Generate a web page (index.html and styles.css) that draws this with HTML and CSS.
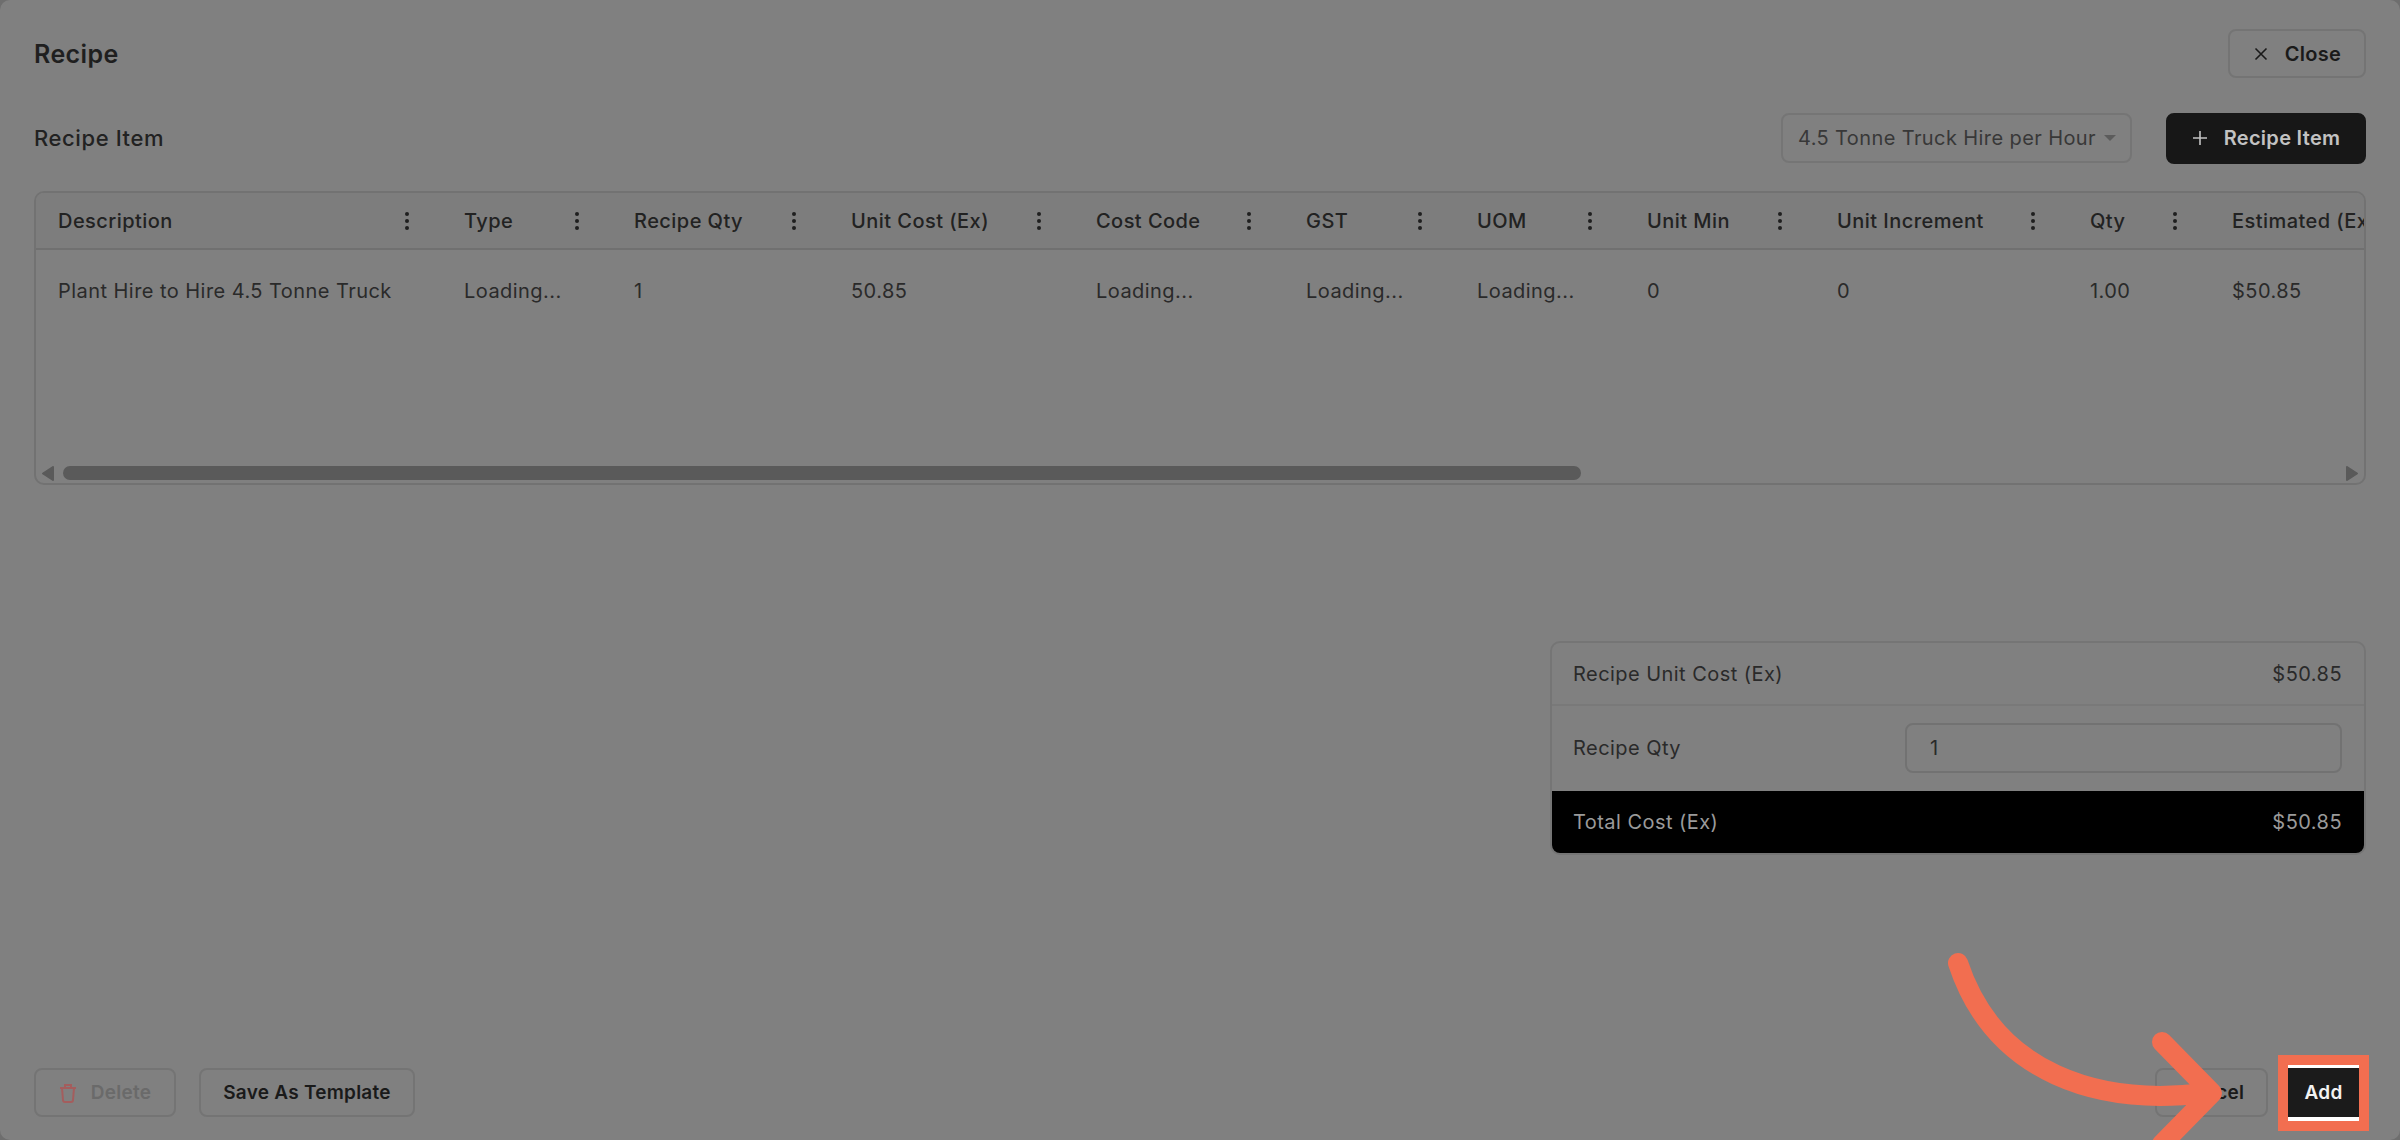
FILE: index.html
```html
<!DOCTYPE html>
<html lang="en">
<head>
<meta charset="utf-8">
<title>Recipe</title>
<link rel="stylesheet" href="styles.css">
</head>
<body>
<main class="modal">
  <header class="top">
    <h1 class="title">Recipe</h1>
    <button class="btn btn-close"><svg class="ic" viewBox="0 0 16 16"><path d="M2.5 2.5l11 11M13.5 2.5l-11 11"/></svg>Close</button>
  </header>
  <section class="bar">
    <h2 class="subtitle">Recipe Item</h2>
    <div class="select">4.5 Tonne Truck Hire per Hour<span class="caret"></span></div>
    <button class="btn btn-dark"><svg class="ic" viewBox="0 0 16 16"><path d="M8 1v14M1 8h14"/></svg>Recipe Item</button>
  </section>
  <section class="table">
    <div class="grid head">
      <div class="cell">Description<i class="kebab"></i></div>
      <div class="cell">Type<i class="kebab"></i></div>
      <div class="cell">Recipe Qty<i class="kebab"></i></div>
      <div class="cell">Unit Cost (Ex)<i class="kebab"></i></div>
      <div class="cell">Cost Code<i class="kebab"></i></div>
      <div class="cell">GST<i class="kebab"></i></div>
      <div class="cell">UOM<i class="kebab"></i></div>
      <div class="cell">Unit Min<i class="kebab"></i></div>
      <div class="cell">Unit Increment<i class="kebab"></i></div>
      <div class="cell">Qty<i class="kebab"></i></div>
      <div class="cell">Estimated (Ex)</div>
    </div>
    <div class="grid row">
      <div class="cell">Plant Hire to Hire 4.5 Tonne Truck</div>
      <div class="cell">Loading...</div>
      <div class="cell">1</div>
      <div class="cell">50.85</div>
      <div class="cell">Loading...</div>
      <div class="cell">Loading...</div>
      <div class="cell">Loading...</div>
      <div class="cell">0</div>
      <div class="cell">0</div>
      <div class="cell">1.00</div>
      <div class="cell">$50.85</div>
    </div>
    <div class="scroll">
      <svg class="arrow" viewBox="0 0 12 15"><path d="M11 1v13L1 7.5z"/></svg>
      <div class="track"><div class="thumb"></div></div>
      <svg class="arrow" viewBox="0 0 12 15"><path d="M1 1v13l10-6.5z"/></svg>
    </div>
  </section>
  <section class="summary-wrap">
    <div class="summary">
      <div class="sum-row sum-first"><span>Recipe Unit Cost (Ex)</span><span>$50.85</span></div>
      <div class="sum-row sum-qty"><span>Recipe Qty</span><div class="input">1</div></div>
      <div class="sum-row sum-total"><span>Total Cost (Ex)</span><span>$50.85</span></div>
    </div>
  </section>
  <footer class="foot">
    <button class="btn btn-delete"><svg class="ic-trash" viewBox="0 0 18 20"><path d="M1 5h16M6 5V2h6v3M3 5l1 12a2 2 0 0 0 2 2h6a2 2 0 0 0 2-2l1-12"/></svg>Delete</button>
    <button class="btn btn-save">Save As Template</button>
    <div class="foot-gap"></div>
    <button class="btn btn-cancel">Cancel</button>
    <div class="highlight"><button class="btn btn-add">Add</button></div>
  </footer>
</main>
<svg class="pointer" viewBox="0 0 2400 1140"><path d="M1958 963C1995 1075 2100 1106 2205 1093M2162 1042l50 51-50 51"/></svg>
</body>
</html>
```
FILE: styles.css
```css
* { box-sizing: border-box; }
html, body { margin: 0; height: 100%; }
body {
  width: 2400px;
  height: 1140px;
  overflow: hidden;
  background: #6e6e6e;
  font-family: Inter, "Liberation Sans", sans-serif;
  color: #262626;
  position: relative;
}
.modal {
  height: 1140px;
  background: #808080;
  border-radius: 10px;
  padding: 29px 34px 23px;
  display: flex;
  flex-direction: column;
}
.top { display: flex; align-items: center; justify-content: space-between; height: 49px; }
.title { margin: 0; font-size: 25px; font-weight: 600; letter-spacing: 0.4px; color: #1f1f1f; }
.btn {
  font-family: inherit;
  display: inline-flex;
  align-items: center;
  justify-content: center;
  height: 49px;
  border: 2px solid #747474;
  border-radius: 8px;
  background: transparent;
  font-size: 19px;
  font-weight: 600;
  letter-spacing: 0.25px;
  color: #1a1a1a;
  padding: 0;
}
.ic { width: 16px; height: 16px; fill: none; stroke: currentColor; stroke-width: 1.6; margin-right: 16px; }
.btn-close { width: 138px; font-size: 20px; letter-spacing: 0.3px; }
.bar { display: flex; align-items: center; margin-top: 35px; height: 50px; }
.subtitle { margin: 0; font-size: 22px; font-weight: 500; letter-spacing: 0.6px; color: #222; flex: 1; }
.select {
  width: 351px;
  height: 50px;
  border: 2px solid #757575;
  border-radius: 8px;
  display: flex;
  align-items: center;
  padding-left: 15px;
  font-size: 20px;
  letter-spacing: 0.4px;
  color: #383838;
  white-space: nowrap;
}
.caret {
  margin-left: 8px;
  border: 6px solid transparent;
  border-top: 6px solid #5c5c5c;
  border-bottom: 0;
}
.btn-dark { width: 200px; height: 51px; margin-left: 34px; background: #171717; border-color: #171717; color: #c2c2c2; font-size: 20px; letter-spacing: 0.3px; }
.table {
  margin-top: 28px;
  height: 294px;
  border: 2px solid #727272;
  border-radius: 10px;
  overflow: hidden;
  display: flex;
  flex-direction: column;
}
.grid {
  display: grid;
  grid-template-columns: 406px 170px 217px 245px 210px 171px 170px 190px 253px 142px 200px;
  width: 2330px;
}
.cell {
  padding-left: 22px;
  padding-right: 10px;
  display: flex;
  align-items: center;
  justify-content: space-between;
  font-size: 20px;
  letter-spacing: 0.45px;
  white-space: nowrap;
}
.head { height: 57px; border-bottom: 2px solid #707070; font-weight: 500; color: #222; background: #7d7d7d; }
.row { height: 82px; color: #2a2a2a; }
.kebab {
  width: 4px;
  height: 4px;
  border-radius: 50%;
  background: #1f1f1f;
  box-shadow: 0 -7px 0 #1f1f1f, 0 7px 0 #1f1f1f;
  margin-right: 23px;
  flex: none;
}
.scroll { margin-top: auto; height: 17px; display: flex; align-items: flex-start; padding: 0 6px; }
.track { flex: 1; padding: 0 9px; }
.thumb { width: 1518px; height: 14px; border-radius: 7px; background: #5a5a5a; }
.arrow { width: 12px; height: 15px; fill: #5a5a5a; stroke: #5a5a5a; stroke-width: 2; stroke-linejoin: round; flex: none; }
.summary-wrap { display: flex; justify-content: flex-end; margin-top: 156px; }
.summary {
  width: 816px;
  height: 214px;
  border: 2px solid #757575;
  border-radius: 10px;
  overflow: hidden;
  display: flex;
  flex-direction: column;
  font-size: 20px;
  letter-spacing: 0.45px;
  color: #2a2a2a;
}
.sum-row { display: flex; align-items: center; justify-content: space-between; padding: 0 22px 0 21px; }
.sum-first { height: 63px; border-bottom: 2px solid #797979; }
.sum-qty { height: 85px; padding-bottom: 2px; }
.input {
  width: 437px;
  height: 50px;
  border: 2px solid #727272;
  border-radius: 8px;
  padding-left: 23px;
  display: flex;
  align-items: center;
}
.sum-total { flex: 1; background: #000; color: #9a9a9a; }
.foot { margin-top: auto; display: flex; align-items: center; height: 49px; }
.btn-delete { width: 142px; color: #6a6a6a; border-color: #747474; }
.ic-trash { width: 18px; height: 20px; fill: none; stroke: #a45d5d; stroke-width: 2; margin-right: 14px; }
.btn-save { width: 216px; margin-left: 23px; }
.foot-gap { flex: 1; }
.btn-cancel { width: 113px; }
.highlight {
  margin-left: 20px;
  margin-right: 7px;
  width: 71px;
  height: 56px;
  background: #fff;
  outline: 10px solid #f26e50;
  display: flex;
  align-items: center;
}
.btn-add { width: 71px; height: 49px; background: #1b1b1b; border-color: #1b1b1b; border-radius: 0; color: #f2f2f2; }
.pointer {
  position: absolute;
  inset: 0;
  width: 2400px;
  height: 1140px;
  fill: none;
  stroke: #f26e50;
  stroke-width: 20;
  stroke-linecap: round;
  stroke-linejoin: round;
}
```
